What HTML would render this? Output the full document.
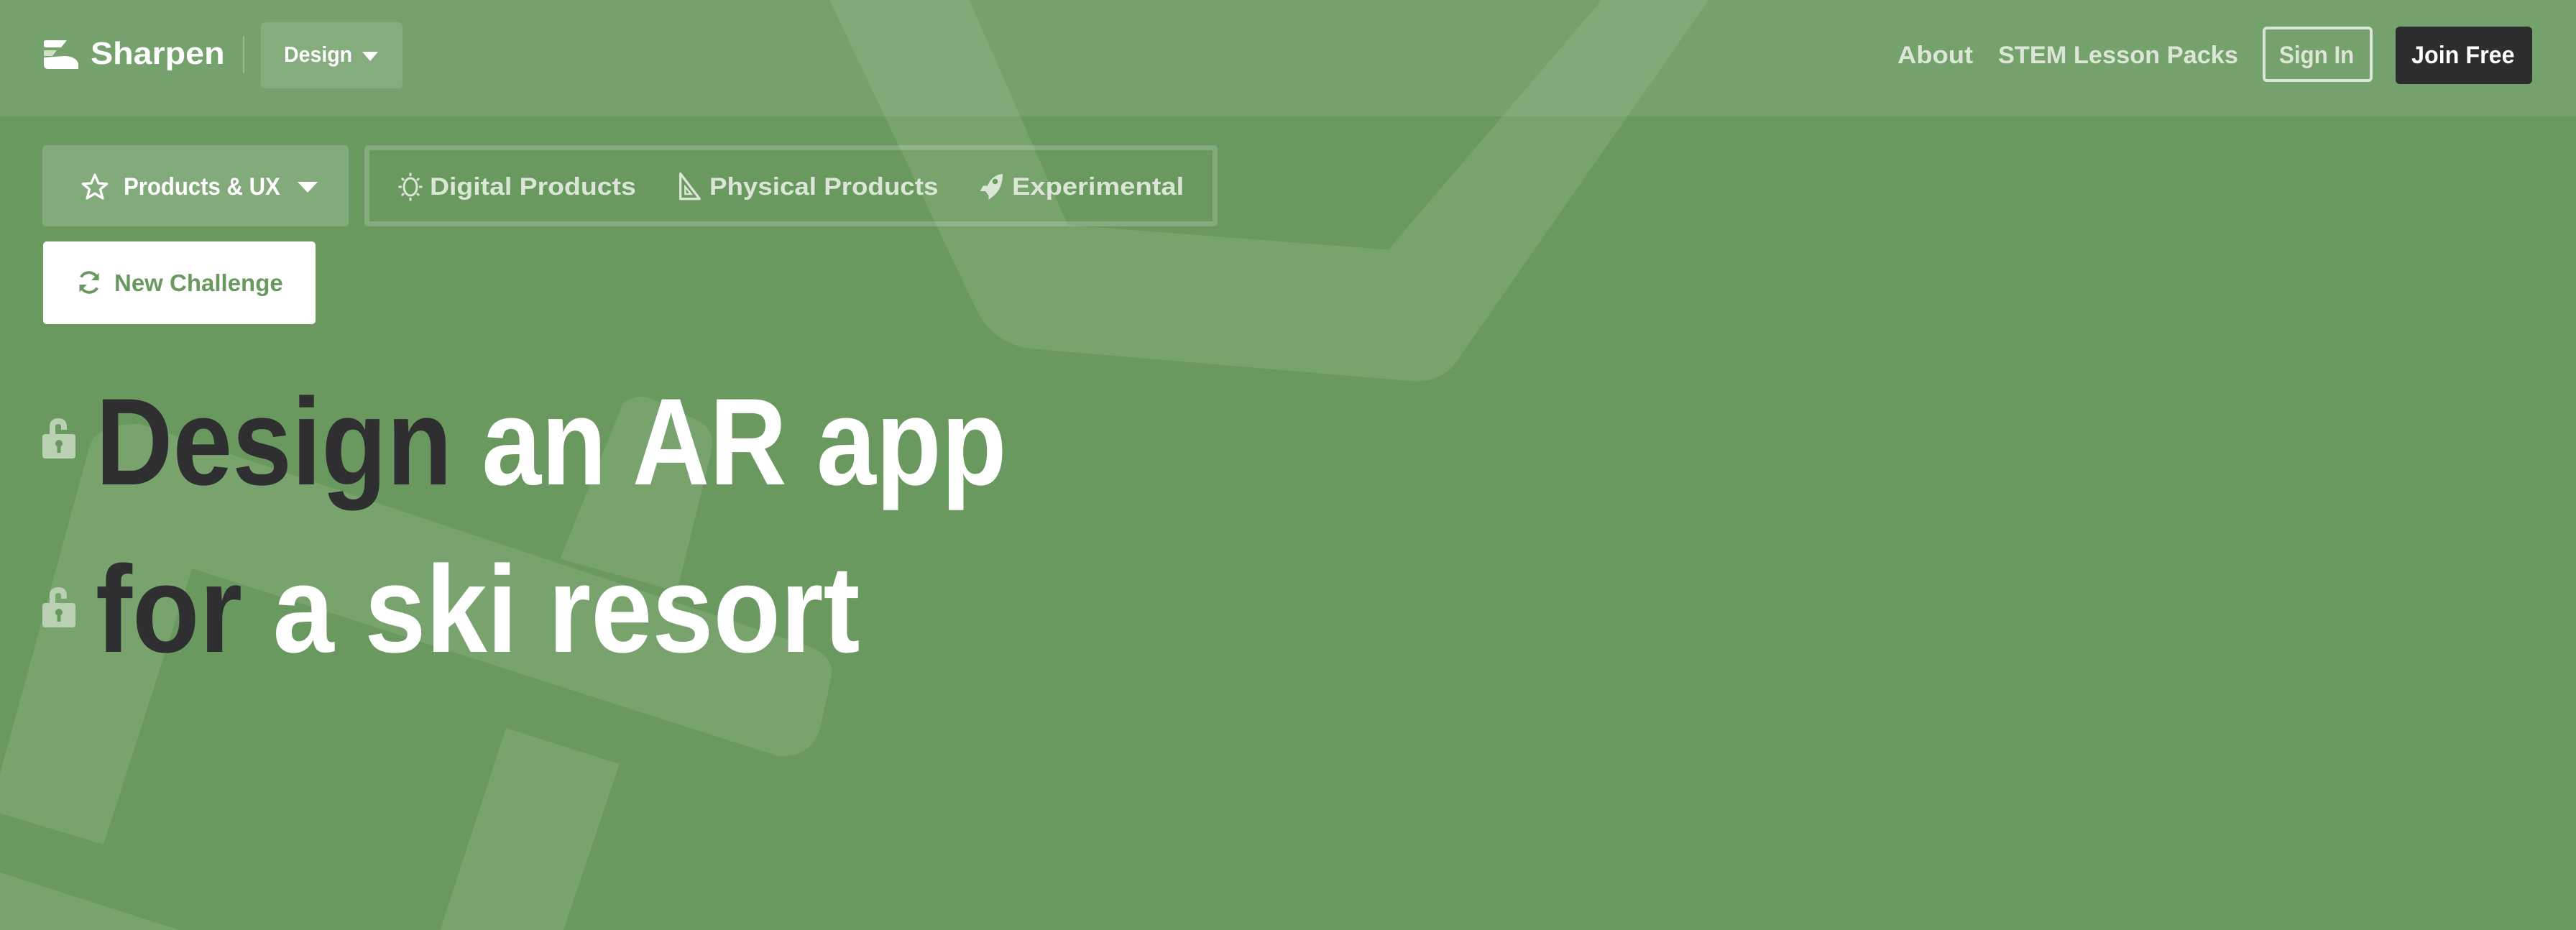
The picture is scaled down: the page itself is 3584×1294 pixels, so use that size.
<!DOCTYPE html>
<html><head><meta charset="utf-8">
<style>
*{margin:0;padding:0;box-sizing:border-box}
html,body{width:3584px;height:1294px;overflow:hidden;background:#6a9960;font-family:"Liberation Sans",sans-serif;font-weight:700}
.abs{position:absolute}
.sx{display:inline-block;transform-origin:0 50%;white-space:nowrap;font-weight:700}
.nav{color:#dbe6d6;font-size:34px}
</style></head><body>
<svg class="abs" style="left:0;top:0" width="3584" height="1294" viewBox="0 0 1568 566" preserveAspectRatio="none">
<g fill="#78a36d">
<path d="M505,0 L595,190 Q605,208 625,212 L860,232 Q880,233 890,215 L1040,0 L975,0 L845,152 L650,137 L590,0 Z"/>
<path d="M55,270 Q60,258 85,258 L494,394 Q508,400 506,412 L500,440 Q495,462 473,460 L117,346 L63,514 L0,495 L0,471 Z"/>
<path d="M379,246 Q385,240 395,242 L425,256 Q436,262 433,275 L412,360 L341,340 Z"/>
<path d="M0,531 L109,566 L0,566 Z"/>
<path d="M308,443 L377,465 L343,566 L268,566 Z"/>
</g>
</svg>
<div class="abs" style="left:0;top:0;width:3584px;height:162px;background:rgba(255,255,255,0.08)"></div>

<!-- logo -->
<svg class="abs" style="left:59px;top:56px" width="52" height="40" viewBox="0 0 52 40">
<path d="M2,2 Q2,0 6,0 L34,0 L26,10 L6,10 Q2,10 2,8 Z" fill="#fff"/>
<path d="M2,14 L20,14 L14,22 L2,22 Z" fill="#cfe0c8"/>
<path d="M2,24 L30,22 Q46,22 50,32 L50,40 L8,40 Q2,40 2,34 Z" fill="#fff"/>
</svg>
<div class="abs" style="left:126px;top:50px;color:#fff;font-size:44px;line-height:50px"><span class="sx" style="transform:scaleX(1.06)">Sharpen</span></div>
<div class="abs" style="left:338px;top:50px;width:2px;height:52px;background:rgba(255,255,255,0.25)"></div>
<div class="abs" style="left:363px;top:31px;width:197px;height:92px;background:rgba(255,255,255,0.12);border-radius:6px"></div>
<div class="abs" style="left:395px;top:58px;color:#fff;font-size:31px;line-height:36px"><span class="sx" style="transform:scaleX(0.92)">Design</span></div>
<svg class="abs" style="left:504px;top:72px" width="22" height="14"><path d="M0,0 L22,0 L11,13 Z" fill="#fff"/></svg>

<div class="abs" style="left:2640px;top:57px;line-height:40px"><span class="sx nav" style="transform:scaleX(1.07)">About</span></div>
<div class="abs" style="left:2780px;top:57px;line-height:40px"><span class="sx nav" style="transform:scaleX(1.01)">STEM Lesson Packs</span></div>
<div class="abs" style="left:3148px;top:37px;width:153px;height:77px;border:4px solid #dbe6d6;border-radius:6px"></div>
<div class="abs" style="left:3171px;top:57px;line-height:40px"><span class="sx nav" style="transform:scaleX(0.92)">Sign In</span></div>
<div class="abs" style="left:3333px;top:37px;width:190px;height:80px;background:#2d2d2f;border-radius:6px"></div>
<div class="abs" style="left:3355px;top:57px;line-height:40px"><span class="sx nav" style="color:#fff;transform:scaleX(0.95)">Join Free</span></div>

<!-- filters -->
<div class="abs" style="left:59px;top:202px;width:426px;height:113px;background:rgba(255,255,255,0.17);border-radius:5px"></div>
<svg class="abs" style="left:112px;top:240px" width="40" height="40" viewBox="0 0 24 24"><path d="M12,2 L15,9 L22,9.5 L16.5,14 L18.5,21.5 L12,17.5 L5.5,21.5 L7.5,14 L2,9.5 L9,9 Z" fill="none" stroke="#fff" stroke-width="2" stroke-linejoin="round"/></svg>
<div class="abs" style="left:172px;top:240px;color:#fff;font-size:34px;line-height:40px"><span class="sx" style="transform:scaleX(0.915)">Products &amp; UX</span></div>
<svg class="abs" style="left:414px;top:253px" width="28" height="16"><path d="M0,0 L28,0 L14,15 Z" fill="#fff"/></svg>

<div class="abs" style="left:507px;top:202px;width:1187px;height:113px;border:7px solid rgba(255,255,255,0.18);border-radius:5px"></div>
<svg class="abs" style="left:553px;top:240px" width="36" height="40" viewBox="0 0 24 26"><ellipse cx="12" cy="13" rx="6" ry="8" fill="none" stroke="#dbe6d6" stroke-width="2"/><path d="M12,0v3M12,23v3M1,13h3M20,13h3M4,5l2,2M18,7l2-2M4,21l2-2M18,19l2,2" stroke="#dbe6d6" stroke-width="2"/></svg>
<div class="abs" style="left:598px;top:240px;font-size:34px;line-height:40px"><span class="sx" style="color:#dbe6d6;transform:scaleX(1.1)">Digital Products</span></div>
<svg class="abs" style="left:943px;top:240px" width="34" height="40" viewBox="0 0 20 24"><path d="M2,1 L2,22 L18,22 Z" fill="none" stroke="#dbe6d6" stroke-width="2" stroke-linejoin="round"/><path d="M6,12 L6,18 L11,18 Z" fill="none" stroke="#dbe6d6" stroke-width="1.5"/></svg>
<div class="abs" style="left:987px;top:240px;font-size:34px;line-height:40px"><span class="sx" style="color:#dbe6d6;transform:scaleX(1.08)">Physical Products</span></div>
<svg class="abs" style="left:1362px;top:240px" width="36" height="40" viewBox="0 0 24 26"><path d="M22,1 Q12,2 8,12 L4,12 L1,17 L6,17 L9,21 L9,25 L14,21 Q22,14 22,1 Z" fill="#dbe6d6"/><circle cx="15" cy="8" r="2.5" fill="#6a9960"/></svg>
<div class="abs" style="left:1408px;top:240px;font-size:34px;line-height:40px"><span class="sx" style="color:#dbe6d6;transform:scaleX(1.12)">Experimental</span></div>

<div class="abs" style="left:60px;top:336px;width:379px;height:115px;background:#fff;border-radius:5px"></div>
<svg class="abs" style="left:106px;top:373px" width="36" height="40" viewBox="0 0 24 24"><path d="M20,9 A8.5,8.5 0 0 0 4.5,7 M4,15 A8.5,8.5 0 0 0 19.5,17" fill="none" stroke="#6a9960" stroke-width="2.6"/><path d="M21,3 L21,10 L14,10 Z M3,21 L3,14 L10,14 Z" fill="#6a9960"/></svg>
<div class="abs" style="left:159px;top:374px;font-size:33px;line-height:40px"><span class="sx" style="color:#6a9960;transform:scaleX(1.0)">New Challenge</span></div>

<!-- headline -->
<svg class="abs" style="left:59px;top:580px" width="46" height="58" viewBox="0 0 46 58"><path d="M10,24 L10,14 Q10,2 22,2 Q34,2 34,14 L34,18 L26,18 L26,14 Q26,10 22,10 Q18,10 18,14 L18,24 Z" fill="#b9d0b2"/><rect x="0" y="24" width="46" height="34" rx="4" fill="#b9d0b2"/><circle cx="23" cy="37" r="5" fill="#6a9960"/><rect x="20.5" y="38" width="5" height="12" fill="#6a9960"/></svg>
<svg class="abs" style="left:59px;top:815px" width="46" height="58" viewBox="0 0 46 58"><path d="M10,24 L10,14 Q10,2 22,2 Q34,2 34,14 L34,18 L26,18 L26,14 Q26,10 22,10 Q18,10 18,14 L18,24 Z" fill="#b9d0b2"/><rect x="0" y="24" width="46" height="34" rx="4" fill="#b9d0b2"/><circle cx="23" cy="37" r="5" fill="#6a9960"/><rect x="20.5" y="38" width="5" height="12" fill="#6a9960"/></svg>
<div class="abs" style="left:133px;top:515px;font-size:172px;line-height:200px"><span class="sx" style="transform:scaleX(0.865);color:#fff"><span style="color:#2f2f31">Design</span> an AR app</span></div>
<div class="abs" style="left:133px;top:748px;font-size:172px;line-height:200px"><span class="sx" style="transform:scaleX(0.89);color:#fff"><span style="color:#2f2f31">for</span> a ski resort</span></div>
</body></html>
